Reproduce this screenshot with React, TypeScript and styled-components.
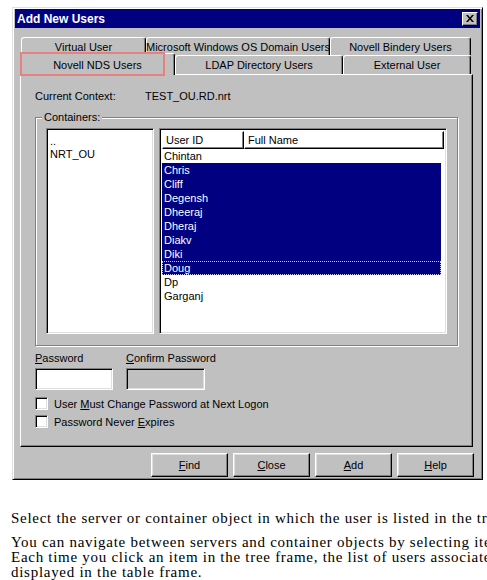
import styled, { createGlobalStyle } from 'styled-components';

const GlobalStyle = createGlobalStyle`
  html, body {
    margin: 0;
    padding: 0;
    background: #fff;
    overflow: hidden;
  }
  body {
    font-family: "Liberation Sans", Arial, sans-serif;
  }
`;

const Page = styled.div`
  width: 487px;
  height: 580px;
  overflow: hidden;
  display: flex;
  flex-direction: column;
`;

const Window = styled.div`
  margin: 7px 0 0 12px;
  width: 471px;
  height: 481px;
  box-sizing: border-box;
  background: #c0c0c0;
  border: 1px solid;
  border-color: #dfdfdf #000 #000 #dfdfdf;
  box-shadow: inset 1px 1px #fff, inset -1px -1px #808080;
  padding: 1px 2px 2px 2px;
  display: flex;
  flex-direction: column;
`;

const TitleBar = styled.div`
  height: 19px;
  background: #000080;
  color: #fff;
  font-weight: bold;
  font-size: 12px;
  padding-left: 2px;
  display: flex;
  align-items: center;
  justify-content: space-between;
`;

const CloseButton = styled.div`
  width: 16px;
  height: 14px;
  margin-right: 2px;
  box-sizing: border-box;
  background: #c0c0c0;
  border: 1px solid;
  border-color: #fff #000 #000 #fff;
  box-shadow: inset -1px -1px #808080;
  display: flex;
  align-items: center;
  justify-content: center;
`;

const Body = styled.div`
  flex: 1;
  display: flex;
  flex-direction: column;
  padding: 9px 5px 0 5px;
`;

const TabRow = styled.div<{ $offset: number; $h: number }>`
  display: flex;
  align-items: flex-end;
  height: ${p => p.$h}px;
  margin-left: ${p => p.$offset}px;
`;

const Tab = styled.div<{ $w: number; $active?: boolean }>`
  position: relative;
  width: ${p => p.$w}px;
  height: ${p => (p.$active ? '22px' : '100%')};
  margin-bottom: ${p => (p.$active ? -1 : 0)}px;
  box-sizing: border-box;
  background: #c0c0c0;
  border-top: 1px solid #fff;
  border-left: 1px solid #fff;
  border-right: 1px solid #000;
  box-shadow: inset -1px 0 #808080;
  border-radius: 3px 3px 0 0;
  display: flex;
  align-items: center;
  justify-content: center;
  font-size: 11px;
  color: #000;
  z-index: ${p => (p.$active ? 2 : 1)};
  white-space: nowrap;
`;

const Highlight = styled.div`
  position: absolute;
  left: -1px;
  top: -2px;
  width: 145px;
  height: 24px;
  box-sizing: border-box;
  border: 2px solid #e88080;
  pointer-events: none;
`;

const Panel = styled.div`
  width: 453px;
  height: 373px;
  box-sizing: border-box;
  border: 1px solid;
  border-color: #fff #000 #000 #fff;
  box-shadow: inset -1px -1px #808080;
  display: flex;
  flex-direction: column;
  padding: 15px 14px 0 14px;
  font-size: 11px;
`;

const ContextRow = styled.div`
  display: flex;
  line-height: 13px;
  height: 13px;
`;

const ContextLabel = styled.span`
  width: 110px;
`;

const GroupBox = styled.div`
  position: relative;
  margin-top: 14px;
  height: 229px;
  box-sizing: border-box;
  border: 1px solid #808080;
  box-shadow: 1px 1px #fff, inset 1px 1px #fff;
  display: flex;
  gap: 5px;
  padding: 10px 10px 11px 10px;
`;

const Legend = styled.span`
  position: absolute;
  top: -7px;
  left: 6px;
  padding: 0 2px;
  background: #c0c0c0;
  line-height: 13px;
`;

const Sunken = styled.div<{ $w?: number; $bg?: string }>`
  ${p => (p.$w ? `width: ${p.$w}px;` : 'flex: 1;')}
  box-sizing: border-box;
  background: ${p => p.$bg || '#fff'};
  border: 1px solid;
  border-color: #808080 #fff #fff #808080;
  box-shadow: inset 1px 1px #000, inset -1px -1px #dfdfdf;
  padding: 2px;
`;

const Tree = styled.div`
  padding: 4px 0 0 1px;
  line-height: 13px;
`;

const TableHeader = styled.div`
  display: flex;
  height: 18px;
`;

const HeaderCell = styled.div<{ $w?: number }>`
  ${p => (p.$w ? `width: ${p.$w}px;` : 'flex: 1;')}
  box-sizing: border-box;
  border: 1px solid;
  border-color: #fff #000 #000 #fff;
  box-shadow: inset -1px -1px #808080;
  padding-left: 3px;
  display: flex;
  align-items: center;
`;

const Row = styled.div<{ $selected?: boolean; $focus?: boolean }>`
  height: 14px;
  line-height: 14px;
  margin-right: 3px;
  padding-left: 2px;
  background: ${p => (p.$selected ? '#000080' : 'transparent')};
  color: ${p => (p.$selected ? '#fff' : '#000')};
  outline: ${p => (p.$focus ? '1px dotted #c8c8ff' : 'none')};
  outline-offset: -1px;
`;

const FieldRow = styled.div`
  display: flex;
  margin-top: 6px;
`;

const Field = styled.div`
  width: 91px;
  display: flex;
  flex-direction: column;
  gap: 3px;
  line-height: 13px;
`;

const Input = styled(Sunken)`
  height: 22px;
`;

const CheckRow = styled.label<{ $gap: number }>`
  display: flex;
  align-items: center;
  gap: 6px;
  height: 13px;
  margin-top: ${p => p.$gap}px;
`;

const CheckBox = styled.span`
  width: 13px;
  height: 13px;
  box-sizing: border-box;
  background: #fff;
  border: 1px solid;
  border-color: #808080 #fff #fff #808080;
  box-shadow: inset 1px 1px #000, inset -1px -1px #dfdfdf;
`;

const ButtonRow = styled.div`
  display: flex;
  justify-content: flex-end;
  gap: 5px;
  margin: 6px 1px 0 0;
`;

const Button = styled.div`
  width: 77px;
  height: 24px;
  box-sizing: border-box;
  border: 1px solid;
  border-color: #fff #000 #000 #fff;
  box-shadow: inset -1px -1px #808080, inset 1px 1px #dfdfdf;
  display: flex;
  align-items: center;
  justify-content: center;
  font-size: 11px;
`;

const Doc = styled.div`
  font-family: "Liberation Serif", "Times New Roman", serif;
  font-size: 15px;
  letter-spacing: 0.72px;
  line-height: 15px;
  color: #000;
  padding-left: 11px;
  white-space: nowrap;
  margin-top: 31px;
`;

const Para = styled.p`
  margin: 0 0 9px 0;
`;

const users = [
  { id: 'Chintan' },
  { id: 'Chris', sel: true },
  { id: 'Cliff', sel: true },
  { id: 'Degensh', sel: true },
  { id: 'Dheeraj', sel: true },
  { id: 'Dheraj', sel: true },
  { id: 'Diakv', sel: true },
  { id: 'Diki', sel: true },
  { id: 'Doug', sel: true, focus: true },
  { id: 'Dp' },
  { id: 'Garganj' },
];

export default function App() {
  return (
    <Page>
      <GlobalStyle />
      <Window>
        <TitleBar>
          <span>Add New Users</span>
          <CloseButton>
            <svg width="8" height="7" viewBox="0 0 8 7">
              <path d="M0 0h2l2 2.5L6 0h2L5 3.5 8 7H6L4 4.5 2 7H0l3-3.5z" fill="#000" />
            </svg>
          </CloseButton>
        </TitleBar>
        <Body>
          <TabRow $offset={1} $h={18}>
            <Tab $w={125}>Virtual User</Tab>
            <Tab $w={184}>Microsoft Windows OS Domain Users</Tab>
            <Tab $w={141}>Novell Bindery Users</Tab>
          </TabRow>
          <TabRow $offset={0} $h={19}>
            <Tab $w={155} $active>
              Novell NDS Users
              <Highlight />
            </Tab>
            <Tab $w={168}>LDAP Directory Users</Tab>
            <Tab $w={128}>External User</Tab>
          </TabRow>
          <Panel>
            <ContextRow>
              <ContextLabel>Current Context:</ContextLabel>
              <span>TEST_OU.RD.nrt</span>
            </ContextRow>
            <GroupBox>
              <Legend>Containers:</Legend>
              <Sunken $w={108}>
                <Tree>
                  <div>..</div>
                  <div>NRT_OU</div>
                </Tree>
              </Sunken>
              <Sunken>
                <TableHeader>
                  <HeaderCell $w={82}>User ID</HeaderCell>
                  <HeaderCell>Full Name</HeaderCell>
                </TableHeader>
                {users.map(u => (
                  <Row key={u.id} $selected={u.sel} $focus={u.focus}>
                    {u.id}
                  </Row>
                ))}
              </Sunken>
            </GroupBox>
            <FieldRow>
              <Field>
                <span><u>P</u>assword</span>
                <Input $w={78} />
              </Field>
              <Field>
                <span><u>C</u>onfirm Password</span>
                <Input $w={79} $bg="#c0c0c0" />
              </Field>
            </FieldRow>
            <CheckRow $gap={7}>
              <CheckBox />
              <span>User <u>M</u>ust Change Password at Next Logon</span>
            </CheckRow>
            <CheckRow $gap={5}>
              <CheckBox />
              <span>Password Never <u>E</u>xpires</span>
            </CheckRow>
          </Panel>
          <ButtonRow>
            <Button><span><u>F</u>ind</span></Button>
            <Button><span><u>C</u>lose</span></Button>
            <Button><span><u>A</u>dd</span></Button>
            <Button><span><u>H</u>elp</span></Button>
          </ButtonRow>
        </Body>
      </Window>
      <Doc>
        <Para>Select the server or container object in which the user is listed in the tree frame.</Para>
        <Para>
          You can navigate between servers and container objects by selecting items in the tree frame.
          <br />
          Each time you click an item in the tree frame, the list of users associated with it is
          <br />
          displayed in the table frame.
        </Para>
      </Doc>
    </Page>
  );
}
